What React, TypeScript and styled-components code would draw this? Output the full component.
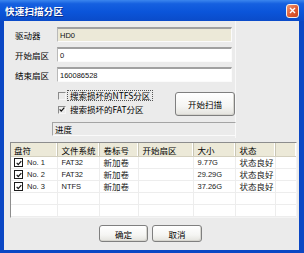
import React from "react";
import styled, { createGlobalStyle } from "styled-components";

const cjk = `"Noto Sans CJK SC", "Noto Sans", sans-serif`;
const latin = `"Liberation Sans", "Noto Sans CJK SC", sans-serif`;

const GlobalStyle = createGlobalStyle`
  html, body {
    margin: 0;
    padding: 0;
    background: #ffffff;
  }
  body {
    font-family: ${cjk};
  }
`;

const Window = styled.div`
  width: 304px;
  height: 253px;
  box-sizing: border-box;
  background: #0a47c4;
  display: flex;
  flex-direction: column;
`;

const TitleBar = styled.div`
  height: 21px;
  flex-shrink: 0;
  display: flex;
  align-items: center;
  padding: 0 5px;
  background: linear-gradient(
    to bottom,
    #3b86ee 0%,
    #1560e0 18%,
    #0b55da 55%,
    #0a4bc9 100%
  );
`;

const Title = styled.span`
  color: #ffffff;
  font-family: ${cjk};
  font-size: 9.5px;
  font-weight: bold;
  letter-spacing: 0.2px;
  text-shadow: 1px 1px 0 #0a2f8c;
`;

const CloseButton = styled.div`
  margin-left: auto;
  width: 13px;
  height: 14px;
  box-sizing: border-box;
  border: 1px solid #f4efe9;
  border-radius: 3px;
  background: linear-gradient(135deg, #f09874 0%, #df5b33 55%, #c9441f 100%);
  display: flex;
  align-items: center;
  justify-content: center;
`;

const Body = styled.div`
  flex: 1;
  margin: 0 5px 3px 4px;
  background: #ebebeb;
  display: flex;
  flex-direction: column;
`;

const TopPanel = styled.div`
  width: 232px;
  height: 117px;
  box-sizing: border-box;
  padding-top: 6px;
  border-right: 1px solid #f8f8f8;
  display: flex;
  flex-direction: column;
`;

const FieldGrid = styled.div`
  margin-left: 11px;
  display: grid;
  grid-template-columns: 42px 175px;
  grid-auto-rows: 15px;
  row-gap: 5px;
`;

const Label = styled.div`
  font-family: ${cjk};
  font-size: 8.5px;
  color: #000;
  display: flex;
  align-items: center;
`;

const Field = styled.div<{ disabled?: boolean }>`
  box-sizing: border-box;
  height: 15px;
  padding-left: 2px;
  border-top: 2px solid #a0a0a0;
  border-left: 1px solid #b9b9b9;
  border-right: 1px solid #fbfbfb;
  border-bottom: 1px solid #fbfbfb;
  background: ${(p) => (p.disabled ? "#ece9d8" : "#ffffff")};
  font-family: ${latin};
  font-size: 7.5px;
  color: #111;
  display: flex;
  align-items: center;
`;

const Options = styled.div`
  margin-top: 8px;
  height: 26px;
  display: flex;
`;

const OptionList = styled.div`
  margin-left: 54px;
  display: flex;
  flex-direction: column;
  gap: 3px;
`;

const OptionRow = styled.div`
  height: 11px;
  display: flex;
  align-items: center;
`;

const Box = styled.div`
  width: 8px;
  height: 8px;
  box-sizing: border-box;
  border-top: 1px solid #8a8a8a;
  border-left: 1px solid #8a8a8a;
  border-right: 1px solid #f6f6f6;
  border-bottom: 1px solid #f6f6f6;
  display: flex;
  align-items: center;
  justify-content: center;
`;

const OptionText = styled.span<{ focused?: boolean }>`
  margin-left: 1px;
  padding: 0 2px;
  height: 11px;
  box-sizing: border-box;
  border: 1px ${(p) => (p.focused ? "dotted #555" : "solid transparent")};
  font-family: ${cjk};
  font-size: 8.5px;
  line-height: 9px;
  color: #000;
  white-space: nowrap;
`;

const Button = styled.div<{ w: number; h: number }>`
  width: ${(p) => p.w}px;
  height: ${(p) => p.h}px;
  box-sizing: border-box;
  border: 1px solid #7f7f7f;
  border-radius: 3px;
  background: linear-gradient(to bottom, #ffffff 0%, #f5f5f3 60%, #e4e3de 100%);
  box-shadow: inset -1px -1px 0 #d6d5cf;
  font-family: ${cjk};
  font-size: 8.5px;
  color: #000;
  display: flex;
  align-items: center;
  justify-content: center;
`;

const ScanButton = styled(Button)`
  margin-left: auto;
  margin-top: 2px;
`;

const Progress = styled.div`
  margin: 6px 0 0 48px;
  width: 184px;
  height: 14px;
  box-sizing: border-box;
  border-top: 1px solid #a4a4a4;
  border-left: 1px solid #a4a4a4;
  border-right: 1px solid #fafafa;
  border-bottom: 1px solid #fafafa;
  padding-left: 2px;
  font-family: ${cjk};
  font-size: 8.5px;
  color: #000;
  display: flex;
  align-items: center;
`;

const ListFrame = styled.div`
  margin: 4px 0 0 6px;
  width: 287px;
  height: 76px;
  box-sizing: border-box;
  border-top: 1px solid #8d8d8d;
  border-left: 1px solid #8d8d8d;
  border-right: 1px solid #f4f4f4;
  border-bottom: 1px solid #f4f4f4;
  background: #ffffff;
  overflow: hidden;
`;

const Table = styled.table`
  border-collapse: collapse;
  table-layout: fixed;
  width: 285px;
`;

const Th = styled.th`
  height: 13px;
  padding: 0 0 0 4px;
  background: #ece9d8;
  border-right: 1px solid #c9c6b4;
  border-bottom: 1px solid #d4d0bf;
  box-shadow: inset -1px 0 0 #ffffff;
  font-family: ${cjk};
  font-size: 8.5px;
  font-weight: normal;
  text-align: left;
  color: #000;
  white-space: nowrap;
  overflow: hidden;
  &:first-child {
    padding-left: 3px;
  }
`;

const Td = styled.td<{ cjkText?: boolean }>`
  height: 11px;
  padding: 0 0 0 4px;
  border-right: 1px solid #ededed;
  border-bottom: 1px solid #ededed;
  font-family: ${(p) => (p.cjkText ? cjk : latin)};
  font-size: ${(p) => (p.cjkText ? "8.5px" : "7.5px")};
  color: #222;
  white-space: nowrap;
  overflow: hidden;
  line-height: 11px;
  &:first-child {
    padding-left: 3px;
  }
`;

const DiskCell = styled.div`
  display: flex;
  align-items: center;
  gap: 4px;
`;

const RowCheck = styled.div`
  width: 9px;
  height: 9px;
  box-sizing: border-box;
  border: 1px solid #1c1c1c;
  background: #ffffff;
  display: flex;
  align-items: center;
  justify-content: center;
`;

const Footer = styled.div`
  margin-top: 7px;
  padding-left: 95px;
  display: flex;
  gap: 4px;
`;

const Check = ({ size = 7 }: { size?: number }) => (
  <svg width={size} height={size} viewBox="0 0 7 7">
    <polyline
      points="0.8,3.4 2.6,5.3 6.2,1.3"
      fill="none"
      stroke="#111"
      strokeWidth="1.4"
    />
  </svg>
);

const rows = [
  { no: "No. 1", fs: "FAT32", label: "新加卷", size: "9.77G", state: "状态良好" },
  { no: "No. 2", fs: "FAT32", label: "新加卷", size: "29.29G", state: "状态良好" },
  { no: "No. 3", fs: "NTFS", label: "新加卷", size: "37.26G", state: "状态良好" },
];

const columns = [46, 42, 39, 55, 42, 40, 21];

export default function App() {
  return (
    <>
      <GlobalStyle />
      <Window>
        <TitleBar>
          <Title>快速扫描分区</Title>
          <CloseButton>
            <svg width="7" height="7" viewBox="0 0 7 7">
              <path d="M1 1L6 6M6 1L1 6" stroke="#fff" strokeWidth="1.4" />
            </svg>
          </CloseButton>
        </TitleBar>
        <Body>
          <TopPanel>
            <FieldGrid>
              <Label>驱动器</Label>
              <Field disabled>HD0</Field>
              <Label>开始扇区</Label>
              <Field>0</Field>
              <Label>结束扇区</Label>
              <Field>160086528</Field>
            </FieldGrid>
            <Options>
              <OptionList>
                <OptionRow>
                  <Box />
                  <OptionText focused>搜索损坏的NTFS分区</OptionText>
                </OptionRow>
                <OptionRow>
                  <Box>
                    <Check />
                  </Box>
                  <OptionText>搜索损坏的FAT分区</OptionText>
                </OptionRow>
              </OptionList>
              <ScanButton w={60} h={24}>
                开始扫描
              </ScanButton>
            </Options>
            <Progress>进度</Progress>
          </TopPanel>
          <ListFrame>
            <Table>
              <colgroup>
                {columns.map((w, i) => (
                  <col key={i} style={{ width: w }} />
                ))}
              </colgroup>
              <thead>
                <tr>
                  <Th>盘符</Th>
                  <Th>文件系统</Th>
                  <Th>卷标号</Th>
                  <Th>开始扇区</Th>
                  <Th>大小</Th>
                  <Th>状态</Th>
                  <Th />
                </tr>
              </thead>
              <tbody>
                {rows.map((r) => (
                  <tr key={r.no}>
                    <Td>
                      <DiskCell>
                        <RowCheck>
                          <Check size={6} />
                        </RowCheck>
                        {r.no}
                      </DiskCell>
                    </Td>
                    <Td>{r.fs}</Td>
                    <Td cjkText>{r.label}</Td>
                    <Td />
                    <Td>{r.size}</Td>
                    <Td cjkText>{r.state}</Td>
                    <Td />
                  </tr>
                ))}
                {[0, 1, 2].map((i) => (
                  <tr key={`empty-${i}`}>
                    {columns.map((_, j) => (
                      <Td key={j} />
                    ))}
                  </tr>
                ))}
              </tbody>
            </Table>
          </ListFrame>
          <Footer>
            <Button w={49} h={17}>
              确定
            </Button>
            <Button w={50} h={17}>
              取消
            </Button>
          </Footer>
        </Body>
      </Window>
    </>
  );
}
